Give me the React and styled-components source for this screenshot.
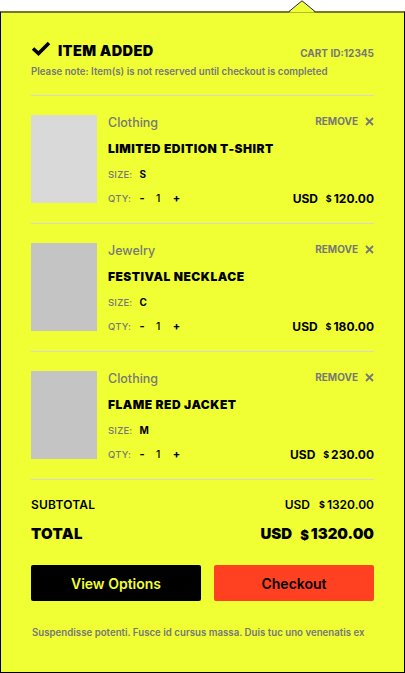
import styled, { createGlobalStyle } from "styled-components";

const GlobalStyle = createGlobalStyle`
  html, body {
    margin: 0;
    padding: 0;
    background: #ffffff;
  }
  * {
    box-sizing: border-box;
  }
`;

const items = [
  { category: "Clothing", name: "LIMITED EDITION T-SHIRT", size: "S", qty: 1, price: "120.00", shade: "#d9d9d9" },
  { category: "Jewelry", name: "FESTIVAL NECKLACE", size: "C", qty: 1, price: "180.00", shade: "#c4c4c4" },
  { category: "Clothing", name: "FLAME RED JACKET", size: "M", qty: 1, price: "230.00", shade: "#c4c4c4" },
];

export default function App() {
  return (
    <>
      <GlobalStyle />
      <Page>
        <Arrow width="26" height="13" viewBox="0 0 26 13">
          <polygon points="0,12.5 13,1 26,12.5" fill="#f0ff33" />
          <polyline points="0,11.5 13,0.8 26,11.5" fill="none" stroke="#222" strokeWidth="1" />
        </Arrow>
        <Panel>
          <Header>
            <HeaderRow>
              <Title>
                <svg width="20" height="15" viewBox="0 0 20 15">
                  <polyline points="2,7.5 7.5,12.5 18,2" fill="none" stroke="#000" strokeWidth="3.6" />
                </svg>
                ITEM ADDED
              </Title>
              <CartId>CART ID:12345</CartId>
            </HeaderRow>
            <Note>Please note: Item(s) is not reserved until checkout is completed</Note>
          </Header>

          {items.map((item, i) => (
            <Item key={i}>
              <Thumb $shade={item.shade} />
              <ItemBody>
                <TopRow>
                  <Category>{item.category}</Category>
                  <Remove>
                    REMOVE
                    <svg width="9" height="9" viewBox="0 0 9 9">
                      <path d="M1 1 L8 8 M8 1 L1 8" stroke="#777" strokeWidth="1.8" />
                    </svg>
                  </Remove>
                </TopRow>
                <ItemName>{item.name}</ItemName>
                <Meta>
                  <MetaLabel>SIZE:</MetaLabel>
                  <SizeValue>{item.size}</SizeValue>
                </Meta>
                <BottomRow>
                  <Meta>
                    <MetaLabel>QTY:</MetaLabel>
                    <QtyBtn>-</QtyBtn>
                    <QtyValue>{item.qty}</QtyValue>
                    <QtyBtn>+</QtyBtn>
                  </Meta>
                  <Price>
                    USD <Dollar>$</Dollar>
                    {item.price}
                  </Price>
                </BottomRow>
              </ItemBody>
            </Item>
          ))}

          <Summary>
            <SummaryRow>
              <SubLabel>SUBTOTAL</SubLabel>
              <SubValue>
                USD <SmallDollar>$</SmallDollar>1320.00
              </SubValue>
            </SummaryRow>
            <SummaryRow $total>
              <TotalLabel>TOTAL</TotalLabel>
              <TotalValue>
                USD <TotalDollar>$</TotalDollar>1320.00
              </TotalValue>
            </SummaryRow>
          </Summary>

          <Buttons>
            <Button $variant="dark">View Options</Button>
            <Button $variant="orange">Checkout</Button>
          </Buttons>

          <Footer>Suspendisse potenti. Fusce id cursus massa. Duis tuc uno venenatis ex</Footer>
        </Panel>
      </Page>
    </>
  );
}

const Page = styled.div`
  position: relative;
  width: 405px;
  height: 673px;
  padding-top: 11px;
  font-family: Inter, "Liberation Sans", sans-serif;
`;

const Arrow = styled.svg`
  position: absolute;
  left: 289px;
  top: 0;
  z-index: 2;
`;

const Panel = styled.div`
  height: 662px;
  background: #f0ff33;
  border: 1px solid #000;
  border-top: 2px solid #77772f;
  padding: 0 30px;
  display: flex;
  flex-direction: column;
`;

const Header = styled.div`
  padding-top: 27px;
  padding-bottom: 18px;
  border-bottom: 1px solid #d6d6d8;
`;

const HeaderRow = styled.div`
  display: flex;
  align-items: center;
  justify-content: space-between;
  height: 20px;
`;

const Title = styled.div`
  display: flex;
  align-items: center;
  gap: 7px;
  font-size: 14.5px;
  font-weight: 900;
  letter-spacing: 0.4px;
  color: #000;

  svg {
    margin-top: -3px;
  }
`;

const CartId = styled.div`
  font-size: 10px;
  font-weight: 700;
  color: #777;
  padding-top: 5px;
`;

const Note = styled.div`
  margin-top: 6px;
  font-size: 9.7px;
  font-weight: 600;
  color: #777;
  white-space: nowrap;
`;

const Item = styled.div`
  display: flex;
  gap: 11px;
  padding: 19px 0 20px;
  border-bottom: 1px solid #d6d6d8;
`;

const Thumb = styled.div`
  width: 66px;
  height: 88px;
  flex-shrink: 0;
  background: ${({ $shade }) => $shade};
`;

const ItemBody = styled.div`
  flex: 1;
  height: 88px;
  display: flex;
  flex-direction: column;
`;

const TopRow = styled.div`
  display: flex;
  justify-content: space-between;
  align-items: flex-start;
  height: 16px;
  flex-shrink: 0;
`;

const Category = styled.div`
  font-size: 12.5px;
  font-weight: 500;
  color: #777;
  line-height: 16px;
`;

const Remove = styled.div`
  display: flex;
  align-items: center;
  gap: 7px;
  font-size: 10px;
  font-weight: 700;
  color: #777;
  line-height: 12px;
`;

const ItemName = styled.div`
  margin-top: 10px;
  font-size: 12px;
  font-weight: 900;
  color: #000;
  line-height: 16px;
  letter-spacing: 0.5px;
  flex-shrink: 0;
`;

const Meta = styled.div`
  display: flex;
  align-items: center;
  height: 14px;
  margin-top: 10px;
  flex-shrink: 0;
`;

const MetaLabel = styled.span`
  font-size: 9.5px;
  font-weight: 500;
  color: #777;
  letter-spacing: 0.2px;
  margin-right: 7px;
`;

const SizeValue = styled.span`
  font-size: 10px;
  font-weight: 700;
  color: #000;
`;

const BottomRow = styled.div`
  display: flex;
  justify-content: space-between;
  align-items: flex-end;
  flex-shrink: 0;
`;

const QtyBtn = styled.span`
  font-size: 11px;
  font-weight: 700;
  color: #000;
  width: 8px;
  text-align: center;
`;

const QtyValue = styled.span`
  font-size: 10.5px;
  font-weight: 500;
  color: #000;
  margin: 0 12px 0 10px;
`;

const Price = styled.div`
  display: flex;
  align-items: center;
  font-size: 12px;
  font-weight: 700;
  color: #000;
  height: 14px;
  white-space: pre;
`;

const Dollar = styled.span`
  font-size: 9px;
  margin: 0 2px 0 5px;
`;

const Summary = styled.div`
  padding-top: 16px;
`;

const SummaryRow = styled.div`
  display: flex;
  justify-content: space-between;
  align-items: center;
  margin-top: ${({ $total }) => ($total ? "11px" : "0")};
  height: ${({ $total }) => ($total ? "20px" : "16px")};
`;

const SubLabel = styled.div`
  font-size: 12px;
  font-weight: 600;
  color: #000;
  letter-spacing: 0.2px;
`;

const SubValue = styled.div`
  display: flex;
  align-items: center;
  font-size: 12px;
  font-weight: 600;
  color: #000;
  white-space: pre;
`;

const SmallDollar = styled.span`
  font-size: 9px;
  font-weight: 700;
  margin: 0 2px 0 6px;
`;

const TotalLabel = styled.div`
  font-size: 15px;
  font-weight: 900;
  color: #000;
  letter-spacing: 0.3px;
`;

const TotalValue = styled.div`
  display: flex;
  align-items: center;
  font-size: 15px;
  font-weight: 900;
  color: #000;
  white-space: pre;
`;

const TotalDollar = styled.span`
  font-size: 13px;
  margin: 3px 2px 0 5px;
`;

const Buttons = styled.div`
  display: flex;
  gap: 13px;
  margin-top: 22px;
`;

const Button = styled.button`
  height: 36px;
  border: none;
  border-radius: 2px;
  font-family: inherit;
  font-size: 14px;
  font-weight: 600;
  cursor: pointer;
  flex: 0 0 ${({ $variant }) => ($variant === "dark" ? "170px" : "160px")};
  background: ${({ $variant }) => ($variant === "dark" ? "#000" : "#ff4122")};
  color: ${({ $variant }) => ($variant === "dark" ? "#f0ff33" : "#000")};
`;

const Footer = styled.div`
  margin-top: 26px;
  font-size: 9.7px;
  font-weight: 600;
  color: #777;
  white-space: nowrap;
  padding-left: 1px;
`;
